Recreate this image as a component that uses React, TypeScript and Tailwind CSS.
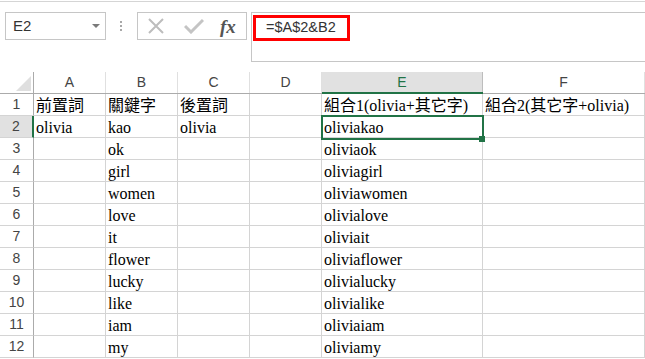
const cols = ["A", "B", "C", "D", "E", "F"];
const widths = ["w-[72px]", "w-[72px]", "w-[72px]", "w-[72px]", "w-[161px]", "w-[162px]"];

const rows: string[][] = [
  ["前置詞", "關鍵字", "後置詞", "", "組合1(olivia+其它字)", "組合2(其它字+olivia)"],
  ["olivia", "kao", "olivia", "", "oliviakao", ""],
  ["", "ok", "", "", "oliviaok", ""],
  ["", "girl", "", "", "oliviagirl", ""],
  ["", "women", "", "", "oliviawomen", ""],
  ["", "love", "", "", "olivialove", ""],
  ["", "it", "", "", "oliviait", ""],
  ["", "flower", "", "", "oliviaflower", ""],
  ["", "lucky", "", "", "olivialucky", ""],
  ["", "like", "", "", "olivialike", ""],
  ["", "iam", "", "", "oliviaiam", ""],
  ["", "my", "", "", "oliviamy", ""],
];

const uiFont = { fontFamily: '"Liberation Sans", Arial, sans-serif' };
const cellFont = {
  fontFamily: '"Liberation Serif", "Noto Sans CJK TC", serif',
};

const App: React.FC = () => {
  return (
    <div className="w-[645px] h-[359px] overflow-hidden bg-white" style={uiFont}>
      {/* ribbon edge */}
      <div className="mt-[1px] h-[11px] border-t border-[#d5d5d5]" />

      {/* formula bar row */}
      <div className="flex h-[50px]">
        <div className="ml-[5px] w-[101px] h-[28px] border border-[#c6c6c6] flex items-center justify-between pl-[7px] pr-[5px]">
          <span className="text-[15px] text-[#333]">E2</span>
          <svg width="8" height="5" viewBox="0 0 8 5">
            <polygon points="0,0 8,0 4,4" fill="#7a7a7a" />
          </svg>
        </div>
        <div className="w-[31px] h-[28px] flex flex-col items-center justify-center gap-[2px] pr-[1px]">
          <span className="w-[2px] h-[2px] bg-[#a8a8a8]" />
          <span className="w-[2px] h-[2px] bg-[#a8a8a8]" />
          <span className="w-[2px] h-[2px] bg-[#a8a8a8]" />
        </div>
        <div className="w-[110px] h-[28px] border border-[#c6c6c6] flex items-center pl-[10px]">
          <svg width="16" height="16" viewBox="0 0 16 16">
            <path d="M1 1 L15 15 M15 1 L1 15" stroke="#bdbdbd" strokeWidth="2" fill="none" />
          </svg>
          <svg className="ml-[20px]" width="20" height="16" viewBox="0 0 20 16">
            <path d="M1 8 L7 14 L19 2" stroke="#c4c4c4" strokeWidth="3" fill="none" />
          </svg>
          <span
            className="ml-[16px] text-[19px] italic font-bold text-[#555] leading-none"
            style={{ fontFamily: '"Liberation Serif", serif' }}
          >
            fx
          </span>
        </div>
        <div className="ml-[4px] flex-1 h-[50px] border-t border-l border-b border-[#c6c6c6]">
          <div className="ml-[1px] mt-[2px] w-[97px] h-[26px] border-[3px] border-[#ff0000] flex items-center pl-[10px]">
            <span className="text-[14.5px] text-[#333]">=$A$2&amp;B2</span>
          </div>
        </div>
      </div>

      <div className="h-[10px]" />

      {/* sheet */}
      <div className="flex flex-col">
        {/* column headers */}
        <div className="flex h-[21px]">
          <div className="w-[34px] border-r border-[#ababab] flex items-end justify-end pr-[2px] pb-[2px]">
            <svg width="15" height="15" viewBox="0 0 15 15">
              <polygon points="15,0 15,15 0,15" fill="#dfdfdf" />
            </svg>
          </div>
          {cols.map((c, i) => (
            <div
              key={c}
              className={`${widths[i]} border-r flex items-center justify-center text-[14px] ${
                c === "E"
                  ? "bg-[#e1e1e1] border-[#bdbdbd] text-[#217346]"
                  : "border-[#e0e0e0] text-[#444]"
              }`}
            >
              {c}
            </div>
          ))}
        </div>
        <div className="flex h-[1px]">
          <div className="w-[34px] bg-[#ababab]" />
          <div className="w-[288px] bg-[#ababab]" />
          <div className="w-[161px] h-[2px] -mt-[1px] bg-[#217346]" />
          <div className="w-[162px] bg-[#ababab]" />
        </div>

        {rows.map((r, ri) => (
          <div key={ri} className="flex h-[22px]">
            <div
              className={`w-[34px] border-b border-[#d4d4d4] flex items-center justify-center text-[14px] text-[#444] ${
                ri === 1 ? "bg-[#e1e1e1] border-r-2 border-r-[#217346]" : "border-r border-r-[#ababab]"
              }`}
            >
              {ri + 1}
            </div>
            {r.map((v, ci) => (
              <div
                key={ci}
                className={`${widths[ci]} relative border-r border-b border-[#d4d4d4] flex items-end pl-[2px] text-[16px] leading-[18px] text-black whitespace-nowrap`}
                style={cellFont}
              >
                {v}
                {ri === 1 && ci === 4 && (
                  <div className="absolute z-10 -left-[1px] -top-[1px] w-[163px] h-[25px] border-2 border-[#217346]">
                    <div className="absolute -right-[3px] -bottom-[4px] w-[6px] h-[6px] bg-[#217346]" />
                  </div>
                )}
              </div>
            ))}
          </div>
        ))}
      </div>
    </div>
  );
};

export default App;
